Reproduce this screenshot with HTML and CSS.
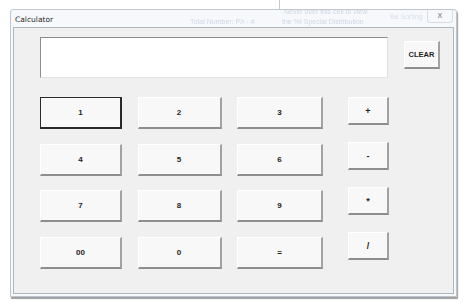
FILE: index.html
```html
<!DOCTYPE html>
<html>
<head>
<meta charset="utf-8">
<link rel="stylesheet" href="styles.css">
</head>
<body>
<div class="backdrop">
  <span class="bg-text bg-a">Never over this cell to view</span>
  <span class="bg-text bg-b">Total Number: P/r - #</span>
  <span class="bg-text bg-c">the %I Special Distribution</span>
  <span class="bg-text bg-d">Be Sorting</span>
  <span class="bg-line"></span>
</div>
<div class="window">
  <div class="titlebar">
    <span class="title">Calculator</span>
    <span class="close">X</span>
  </div>
  <div class="client">
    <div class="top">
      <div class="display"></div>
      <button class="btn clear">CLEAR</button>
    </div>
    <div class="pad">
      <div class="keys">
        <button class="btn key focus">1</button>
        <button class="btn key">2</button>
        <button class="btn key">3</button>
        <button class="btn key">4</button>
        <button class="btn key">5</button>
        <button class="btn key">6</button>
        <button class="btn key">7</button>
        <button class="btn key">8</button>
        <button class="btn key">9</button>
        <button class="btn key">00</button>
        <button class="btn key">0</button>
        <button class="btn key">=</button>
      </div>
      <div class="ops">
        <button class="btn op">+</button>
        <button class="btn op">-</button>
        <button class="btn op">*</button>
        <button class="btn op">/</button>
      </div>
    </div>
  </div>
</div>
</body>
</html>
```
FILE: styles.css
```css
html, body {
  margin: 0;
  padding: 0;
}
body {
  width: 466px;
  height: 303px;
  position: relative;
  overflow: hidden;
  background: #ffffff;
  font-family: "Liberation Sans", Arial, sans-serif;
}
.backdrop {
  position: absolute;
  inset: 0;
}
.bg-text {
  position: absolute;
  font-size: 7px;
  color: #9fb7d3;
  white-space: nowrap;
  filter: blur(0.4px);
}
.bg-a { left: 284px; top: 8px; }
.bg-b { left: 190px; top: 18px; }
.bg-c { left: 282px; top: 18px; }
.bg-d { left: 390px; top: 13px; color: #b7cbe0; }
.bg-line {
  position: absolute;
  left: 279px;
  top: 0;
  width: 1px;
  height: 9px;
  background: #c8c8c8;
}
.window {
  position: absolute;
  left: 10px;
  top: 9px;
  width: 447px;
  height: 288px;
  box-sizing: border-box;
  border: 1px solid #bfc6ce;
  border-radius: 3px 3px 0 0;
  background: rgba(240, 243, 247, 0.55);
  box-shadow: 1px 2px 1px rgba(80, 80, 80, 0.55);
  display: flex;
  flex-direction: column;
  padding: 0 2px 2px 2px;
}
.titlebar {
  height: 17px;
  display: flex;
  align-items: center;
  justify-content: space-between;
}
.title {
  font-family: "DejaVu Sans", sans-serif;
  font-size: 7.5px;
  color: #2b2b2b;
  padding-left: 2px;
  padding-top: 2px;
}
.close {
  font-family: "DejaVu Sans", sans-serif;
  font-size: 7px;
  color: #6a7480;
  width: 24px;
  height: 12px;
  line-height: 12px;
  text-align: center;
  margin-top: -4px;
  margin-right: 1px;
  border: 1px solid #d7dde3;
  border-top: none;
  border-radius: 0 0 3px 3px;
}
.client {
  flex: 1;
  background: #f0f0f0;
  border: 1px solid #aeb6be;
  padding: 9px 0 0 26px;
}
.top {
  display: flex;
  align-items: flex-start;
}
.display {
  width: 348px;
  height: 41px;
  box-sizing: border-box;
  background: #ffffff;
  border-top: 1px solid #8c8c8c;
  border-left: 1px solid #8c8c8c;
  border-right: 1px solid #e2e2e2;
  border-bottom: 1px solid #e2e2e2;
}
.btn {
  box-sizing: border-box;
  margin: 0;
  padding: 0;
  background: #f8f8f8;
  border-top: 1px solid #ffffff;
  border-left: 1px solid #ffffff;
  border-right: 2px solid #a2a2a2;
  border-bottom: 2px solid #8e8e8e;
  font-family: "Liberation Sans", Arial, sans-serif;
  font-weight: bold;
  font-size: 8px;
  color: #1e1e1e;
  display: flex;
  align-items: center;
  justify-content: center;
}
.clear {
  width: 36px;
  height: 28px;
  margin-left: 16px;
  margin-top: 4px;
  font-size: 7.5px;
}
.pad {
  display: flex;
  align-items: flex-start;
  margin-top: 19px;
}
.keys {
  display: grid;
  grid-template-columns: 82px 84px 86px;
  grid-auto-rows: 32px;
  column-gap: 15.5px;
  row-gap: 14.7px;
}
.key {
  width: 100%;
  height: 100%;
}
.focus {
  border: 1px solid #2a2a2a;
  border-right: 2px solid #2a2a2a;
  border-bottom: 2px solid #2a2a2a;
}
.ops {
  display: flex;
  flex-direction: column;
  gap: 17px;
  margin-left: 25px;
}
.op {
  width: 41px;
  height: 28px;
  font-size: 9px;
}
```
